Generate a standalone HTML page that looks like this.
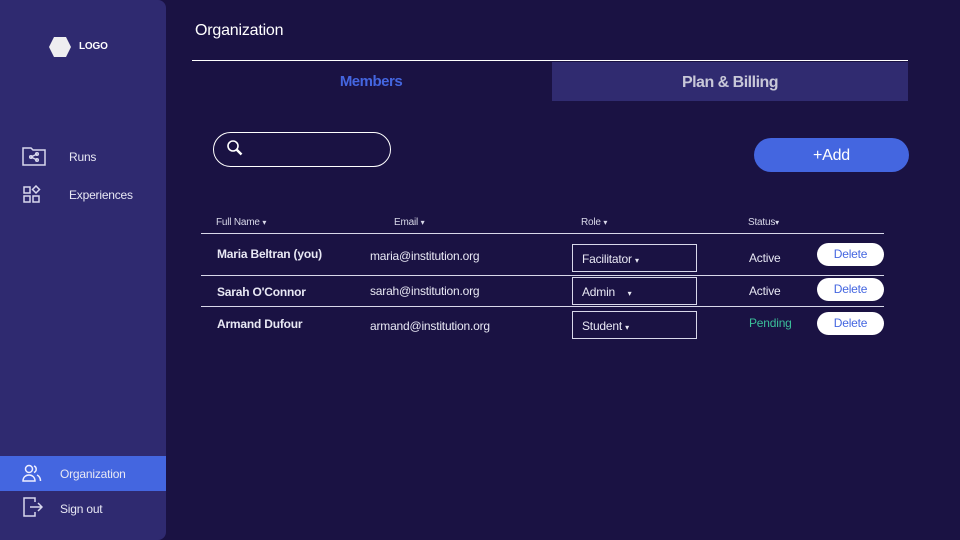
<!DOCTYPE html>
<html><head><meta charset="utf-8"><style>
*{margin:0;padding:0;box-sizing:border-box}
body{width:960px;height:540px;background:#1a1243;font-family:"Liberation Sans",sans-serif;color:#fff;position:relative;overflow:hidden;letter-spacing:-0.2px}
.sb{position:absolute;left:0;top:0;width:166px;height:540px;background:#2f2a70;border-radius:0 8px 8px 0}
.abs{position:absolute}
.t{font-size:12px;color:#e8e8f4}
.th{position:absolute;top:217px;font-size:10px;color:#d8d8e8}
.hr{position:absolute;left:201px;width:683px;height:1px;background:#d8d8ea}
.cell{position:absolute;font-size:12px;color:#e8e8f4}
.b{font-weight:bold}
.ar{font-size:8px}
.sel{position:absolute;left:572px;width:125px;height:28px;border:1px solid #d8d8ea;font-size:12px;padding:7px 9px;color:#e8e8f4}
.del{position:absolute;left:817px;width:67px;height:23px;background:#fff;border-radius:12px;color:#4466e0;font-size:12px;text-align:center;line-height:23px}
</style></head><body>
<div class="sb"></div>
<svg class="abs" style="left:48px;top:36px" width="24" height="22"><polygon points="6,1 18,1 23,11 18,21 6,21 1,11" fill="#eeeef0"/></svg>
<div class="abs b" style="left:79px;top:41px;font-size:10px">LOGO</div>
<svg class="abs" style="left:22px;top:146px" width="24" height="20" fill="none" stroke="#d8d8ee" stroke-width="1.5"><path d="M1 2h8l2 2h12v15H1z"/><circle cx="9" cy="11" r="1.3"/><circle cx="15" cy="8" r="1.3"/><circle cx="15" cy="14" r="1.3"/><path d="M9 11l6-3M9 11l6 3"/></svg>
<div class="abs t" style="left:69px;top:150px">Runs</div>
<svg class="abs" style="left:23px;top:185px" width="18" height="18" fill="none" stroke="#d8d8ee" stroke-width="1.5"><rect x="1" y="2" width="6" height="6"/><rect x="1" y="11" width="6" height="6"/><rect x="10" y="11" width="6" height="6"/><path d="M13 1l3.5 3.5L13 8 9.5 4.5z"/></svg>
<div class="abs t" style="left:69px;top:188px">Experiences</div>
<div class="abs" style="left:0;top:456px;width:166px;height:35px;background:#4466e0"></div>
<svg class="abs" style="left:22px;top:464px" width="20" height="18" fill="none" stroke="#eef" stroke-width="1.5"><circle cx="7" cy="5" r="3.5"/><path d="M1 17c0-4 3-6 6-6s6 2 6 6z"/><path d="M12 2a3.5 3.5 0 0 1 0 6.5M15 11c2 1 3.5 3 3.5 6"/></svg>
<div class="abs t" style="left:60px;top:467px">Organization</div>
<svg class="abs" style="left:23px;top:497px" width="20" height="20" fill="none" stroke="#d8d8ee" stroke-width="1.5"><path d="M12 5V1H1v18h11v-4"/><path d="M7 10h12M15 6l4 4-4 4"/></svg>
<div class="abs t" style="left:60px;top:502px">Sign out</div>

<div class="abs" style="left:195px;top:22px;font-size:16px">Organization</div>
<div class="abs" style="left:192px;top:60px;width:716px;height:1px;background:#fff"></div>
<div class="abs b" style="left:192px;top:73px;width:358px;text-align:center;font-size:15px;color:#4466e0;letter-spacing:-0.5px">Members</div>
<div class="abs b" style="left:552px;top:62px;width:356px;height:39px;background:#302b70;text-align:center;line-height:41px;font-size:16px;color:#c8c8d8;letter-spacing:-0.5px">Plan &amp; Billing</div>
<div class="abs" style="left:213px;top:132px;width:178px;height:35px;border:1px solid #fff;border-radius:18px"></div>
<svg class="abs" style="left:226px;top:139px" width="18" height="18" fill="none" stroke="#fff" stroke-width="1.6"><circle cx="7" cy="7" r="5"/><path d="M10.5 10.5l5 5" stroke-width="2.5"/></svg>
<div class="abs" style="left:754px;top:138px;width:155px;height:34px;background:#4466e0;border-radius:17px;text-align:center;line-height:35px;font-size:16px">+Add</div>

<div class="th" style="left:216px">Full Name <span class="ar">▾</span></div>
<div class="th" style="left:394px">Email <span class="ar">▾</span></div>
<div class="th" style="left:581px">Role <span class="ar">▾</span></div>
<div class="th" style="left:748px">Status<span class="ar">▾</span></div>
<div class="hr" style="top:233px"></div>
<div class="hr" style="top:275px"></div>
<div class="hr" style="top:306px"></div>

<div class="cell b" style="left:217px;top:247px">Maria Beltran (you)</div>
<div class="cell" style="left:370px;top:249px">maria@institution.org</div>
<div class="sel" style="top:244px">Facilitator <span class="ar">▾</span></div>
<div class="cell" style="left:749px;top:251px">Active</div>
<div class="del" style="top:243px">Delete</div>

<div class="cell b" style="left:217px;top:285px">Sarah O'Connor</div>
<div class="cell" style="left:370px;top:284px">sarah@institution.org</div>
<div class="sel" style="top:277px">Admin &nbsp;&nbsp;&nbsp;<span class="ar">▾</span></div>
<div class="cell" style="left:749px;top:284px">Active</div>
<div class="del" style="top:278px">Delete</div>

<div class="cell b" style="left:217px;top:317px">Armand Dufour</div>
<div class="cell" style="left:370px;top:319px">armand@institution.org</div>
<div class="sel" style="top:311px">Student <span class="ar">▾</span></div>
<div class="cell" style="left:749px;top:316px;color:#3bbf9a">Pending</div>
<div class="del" style="top:312px">Delete</div>
</body></html>
